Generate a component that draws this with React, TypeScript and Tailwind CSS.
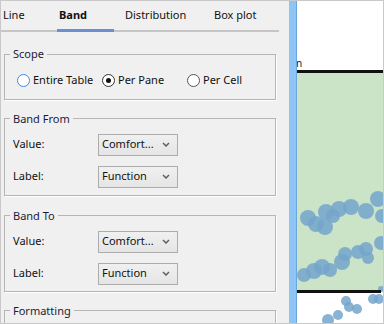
import { ReactNode } from 'react';

const font = "font-['Noto_Sans','Open_Sans',sans-serif]";

const dots: [number, number, number][] = [
  [308, 218, 8], [316, 224, 8], [325, 227, 8], [326, 212, 8], [333, 216, 7],
  [339, 209, 8], [351, 207, 8], [366, 211, 8], [378, 199, 8], [382, 216, 7],
  [304, 275, 7], [314, 271, 8], [322, 267, 8], [330, 270, 7], [342, 262, 8],
  [345, 254, 7], [358, 252, 7], [366, 249, 7], [368, 258, 6], [381, 243, 7],
  [346, 301, 5], [349, 307, 5], [357, 309, 5], [338, 315, 5], [328, 320, 6],
  [373, 299, 5], [379, 299, 5], [381, 289, 3],
];

function Chevron() {
  return (
    <svg width="8" height="5" viewBox="0 0 8 5" className="shrink-0">
      <path d="M1 1 L4 4 L7 1" fill="none" stroke="#606060" strokeWidth="1.5" />
    </svg>
  );
}

function Select({ value }: { value: string }) {
  return (
    <div className="w-[80px] h-[22px] flex items-center justify-between pl-[3px] pr-[7px] border border-[#acacac] bg-gradient-to-b from-[#f0f0f0] to-[#e5e5e5] text-[#111]">
      <span>{value}</span>
      <Chevron />
    </div>
  );
}

function Row({ label, value }: { label: string; value: string }) {
  return (
    <div className="flex items-center pl-[8px]">
      <span className="w-[85px] text-[#111]">{label}</span>
      <Select value={value} />
    </div>
  );
}

function Group({ title, className, children }: { title: string; className?: string; children?: ReactNode }) {
  return (
    <fieldset className={`border border-[#b5b5b5] shadow-[1px_1px_0_#ffffff] ${className ?? ''}`}>
      <legend className="ml-[5px] px-[3px] leading-[16px] text-[#1b1b3a]">{title}</legend>
      {children}
    </fieldset>
  );
}

function Radio({ label, state }: { label: string; state: 'hover' | 'on' | 'off' }) {
  const ring =
    state === 'hover' ? 'border-[#3a8ee6]' : state === 'on' ? 'border-[#333]' : 'border-[#555]';
  return (
    <div className="w-[85px] flex items-center gap-[3px]">
      <span className={`w-[13px] h-[13px] rounded-full border bg-white flex items-center justify-center ${ring}`}>
        {state === 'on' && <span className="w-[5px] h-[5px] rounded-full bg-[#111]" />}
      </span>
      <span className="text-[#111]">{label}</span>
    </div>
  );
}

export default function App() {
  return (
    <div className={`w-[384px] h-[324px] flex border border-[#c9c9c9] bg-[#f0f0f0] overflow-hidden text-[11px] ${font}`}>
      <div className="w-[288px] shrink-0 flex flex-col">
        {/* tabs */}
        <div className="flex items-start h-[31px] w-[278px] border-b-2 border-[#c6c6c6]">
          <div className="w-[56px] h-[29px] flex items-center pl-[2px] text-[#111]">Line</div>
          <div className="w-[57px] h-[31px] flex items-center pl-[2px] pt-[1px] border-b-[3px] border-[#6b8fcf] font-bold text-[#111]">Band</div>
          <div className="w-[89px] h-[29px] flex items-center pl-[11px] text-[#111]">Distribution</div>
          <div className="h-[29px] flex items-center pl-[11px] text-[#111]">Box plot</div>
        </div>

        <div className="w-[272px] ml-[3px] flex flex-col">
          <Group title="Scope" className="mt-[14px] pt-[10px] pb-[10px]">
            <div className="flex pl-[12px]">
              <Radio label="Entire Table" state="hover" />
              <Radio label="Per Pane" state="on" />
              <Radio label="Per Cell" state="off" />
            </div>
          </Group>

          <Group title="Band From" className="mt-[11px] pt-[7px] pb-[7px]">
            <div className="flex flex-col gap-[10px]">
              <Row label="Value:" value="Comfort..." />
              <Row label="Label:" value="Function" />
            </div>
          </Group>

          <Group title="Band To" className="mt-[12px] pt-[7px] pb-[6px]">
            <div className="flex flex-col gap-[10px]">
              <Row label="Value:" value="Comfort..." />
              <Row label="Label:" value="Function" />
            </div>
          </Group>

          <Group title="Formatting" className="mt-[11px] h-[40px]" />
        </div>
      </div>

      {/* splitter */}
      <div className="w-[8px] shrink-0 bg-[#8fc5f5] border-r border-[#6ba6df]" />

      {/* chart */}
      <div className="flex-1 bg-white">
        <svg width="86" height="322" viewBox="297 1 86 322" className="block">
          <rect x="297" y="72" width="86" height="219" fill="#cbe4c8" />
          <text x="296" y="67" fontSize="10" fill="#111" fontFamily="Noto Sans, sans-serif">n</text>
          {dots.map(([x, y, r], i) => (
            <circle key={i} cx={x} cy={y} r={r} fill="#74a4cb" fillOpacity="0.85" />
          ))}
          <rect x="297" y="70" width="86" height="3" fill="#111" />
          <rect x="297" y="290" width="84" height="3" fill="#111" />
        </svg>
      </div>
    </div>
  );
}
